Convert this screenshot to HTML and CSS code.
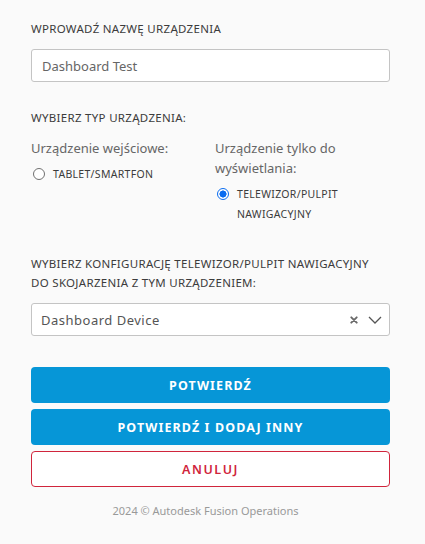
FILE: index.html
```html
<!DOCTYPE html>
<html lang="pl">
<head>
<meta charset="utf-8">
<link rel="stylesheet" href="styles.css">
</head>
<body>
<form class="form">
  <div class="label">WPROWADŹ NAZWĘ URZĄDZENIA</div>
  <div class="input">Dashboard Test</div>

  <div class="label label-type">WYBIERZ TYP URZĄDZENIA:</div>
  <div class="types">
    <div class="type">
      <div class="type-title">Urządzenie wejściowe:</div>
      <div class="radio">
        <span class="dot"></span>
        <span class="radio-text">TABLET/SMARTFON</span>
      </div>
    </div>
    <div class="type">
      <div class="type-title">Urządzenie tylko do wyświetlania:</div>
      <div class="radio">
        <span class="dot dot-on"></span>
        <span class="radio-text">TELEWIZOR/PULPIT NAWIGACYJNY</span>
      </div>
    </div>
  </div>

  <div class="label label-config">WYBIERZ KONFIGURACJĘ TELEWIZOR/PULPIT NAWIGACYJNY DO SKOJARZENIA Z TYM URZĄDZENIEM:</div>
  <div class="select">
    <span class="select-value">Dashboard Device</span>
    <span class="clear">
      <svg width="8" height="8" viewBox="0 0 8 8"><path d="M1.3 1.3 L6.7 6.7 M6.7 1.3 L1.3 6.7" stroke="#6a6a6a" stroke-width="1.9" stroke-linecap="round"/></svg>
    </span>
    <span class="chev">
      <svg width="14" height="8" viewBox="0 0 14 8"><path d="M1 1 L7 7 L13 1" fill="none" stroke="#555" stroke-width="1.3"/></svg>
    </span>
  </div>

  <div class="buttons">
    <div class="btn btn-primary">POTWIERDŹ</div>
    <div class="btn btn-primary">POTWIERDŹ I DODAJ INNY</div>
    <div class="btn btn-cancel">ANULUJ</div>
  </div>

  <div class="footer">2024 © Autodesk Fusion Operations</div>
</form>
</body>
</html>
```

FILE: styles.css
```css
html, body {
  margin: 0;
  padding: 0;
  background: #fafafa;
}
body {
  font-family: "Noto Sans", "Open Sans", sans-serif;
  color: #3c3c3c;
}
.form {
  width: 359px;
  padding: 19px 0 0 31px;
}
.label {
  font-size: 11.5px;
  line-height: 20px;
  color: #3c3c3c;
  letter-spacing: 0.3px;
}
.input {
  margin-top: 10px;
  height: 33px;
  box-sizing: border-box;
  border: 1px solid #c4c4c4;
  border-radius: 3px;
  background: #fff;
  font-size: 13px;
  color: #666;
  padding-left: 10px;
  display: flex;
  align-items: center;
}
.label-type {
  margin-top: 26px;
}
.types {
  margin-top: 10px;
  display: grid;
  grid-template-columns: 1fr 1fr;
  column-gap: 9px;
}
.type-title {
  font-size: 13px;
  line-height: 20px;
  color: #666;
}
.radio {
  margin-top: 6px;
  display: flex;
  align-items: flex-start;
  padding-left: 2px;
}
.dot {
  flex: none;
  width: 12px;
  height: 12px;
  box-sizing: border-box;
  border: 1px solid #707070;
  border-radius: 50%;
  margin-top: 4px;
  margin-right: 8px;
  background: #fff;
}
.dot-on {
  border: 1.5px solid #0a6cf0;
  background: radial-gradient(circle, #0a6cf0 0 3.3px, #fff 3.8px);
}
.radio-text {
  font-size: 10.5px;
  line-height: 20px;
  letter-spacing: 0.3px;
  color: #3c3c3c;
}
.label-config {
  margin-top: 30px;
  line-height: 19px;
  max-width: 350px;
}
.select {
  margin-top: 11px;
  height: 33px;
  box-sizing: border-box;
  border: 1px solid #c4c4c4;
  border-radius: 3px;
  background: #fff;
  display: flex;
  align-items: center;
  padding: 0 7px 0 9px;
}
.select-value {
  flex: 1;
  font-size: 13px;
  color: #555;
  letter-spacing: 0.5px;
}
.clear {
  display: flex;
  margin-right: 10px;
}
.chev {
  display: flex;
}
.buttons {
  margin-top: 31px;
  display: flex;
  flex-direction: column;
  gap: 6px;
}
.btn {
  height: 36px;
  box-sizing: border-box;
  border-radius: 4px;
  display: flex;
  align-items: center;
  justify-content: center;
  font-size: 12.5px;
  font-weight: 700;
  letter-spacing: 1.1px;
}
.btn-primary {
  background: #0696d7;
  color: #fff;
}
.btn-cancel {
  background: #fff;
  border: 1px solid #d0253c;
  color: #d0253c;
  font-weight: 600;
  letter-spacing: 1.6px;
}
.footer {
  margin-top: 16px;
  padding-right: 10px;
  text-align: center;
  font-size: 11px;
  line-height: 16px;
  color: #999;
}
```
